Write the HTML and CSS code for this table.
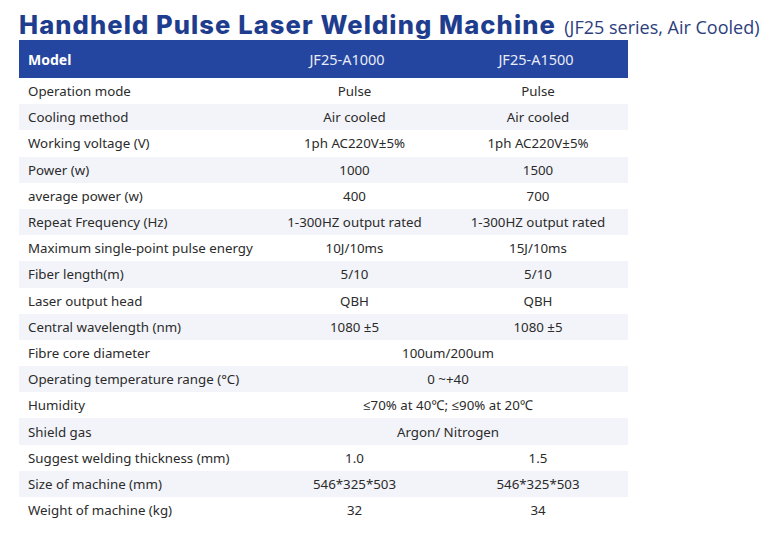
FILE: index.html
```html
<!DOCTYPE html>
<html>
<head>
<meta charset="utf-8">
<link rel="stylesheet" href="styles.css">
</head>
<body>
<h1 class="title"><span class="main">Handheld Pulse Laser Welding Machine</span> <span class="sub">(JF25 series, Air Cooled)</span></h1>
<table class="spec">
  <colgroup><col class="c1"><col class="c2"><col class="c3"></colgroup>
  <thead>
    <tr><th class="label">Model</th><th class="m1">JF25-A1000</th><th class="m2">JF25-A1500</th></tr>
  </thead>
  <tbody>
    <tr><td class="label">Operation mode</td><td class="v1">Pulse</td><td>Pulse</td></tr>
    <tr><td class="label">Cooling method</td><td class="v1">Air cooled</td><td>Air cooled</td></tr>
    <tr><td class="label">Working voltage (V)</td><td class="v1">1ph AC220V±5%</td><td>1ph AC220V±5%</td></tr>
    <tr><td class="label">Power (w)</td><td class="v1">1000</td><td>1500</td></tr>
    <tr><td class="label">average power (w)</td><td class="v1">400</td><td>700</td></tr>
    <tr><td class="label">Repeat Frequency (Hz)</td><td class="v1">1-300HZ output rated</td><td>1-300HZ output rated</td></tr>
    <tr><td class="label">Maximum single-point pulse energy</td><td class="v1">10J/10ms</td><td>15J/10ms</td></tr>
    <tr><td class="label">Fiber length(m)</td><td class="v1">5/10</td><td>5/10</td></tr>
    <tr><td class="label">Laser output head</td><td class="v1">QBH</td><td>QBH</td></tr>
    <tr><td class="label">Central wavelength (nm)</td><td class="v1">1080 ±5</td><td>1080 ±5</td></tr>
    <tr><td class="label">Fibre core diameter</td><td colspan="2">100um/200um</td></tr>
    <tr><td class="label">Operating temperature range (°C)</td><td colspan="2">0 ~+40</td></tr>
    <tr><td class="label">Humidity</td><td colspan="2">≤70% at 40℃; ≤90% at 20℃</td></tr>
    <tr><td class="label">Shield gas</td><td colspan="2">Argon/ Nitrogen</td></tr>
    <tr><td class="label">Suggest welding thickness (mm)</td><td class="v1">1.0</td><td>1.5</td></tr>
    <tr><td class="label">Size of machine (mm)</td><td class="v1">546*325*503</td><td>546*325*503</td></tr>
    <tr><td class="label">Weight of machine (kg)</td><td class="v1">32</td><td>34</td></tr>
  </tbody>
</table>
</body>
</html>
```
FILE: styles.css
```css
html, body {
  margin: 0;
  padding: 0;
  background: #ffffff;
}
body {
  padding: 7px 0 0 19px;
  font-family: "Noto Sans", "Open Sans", sans-serif;
  color: #2b2b2b;
}
.title {
  margin: 0;
  height: 33px;
  line-height: 30px;
  white-space: nowrap;
}
.title .main {
  font-family: Inter, "Liberation Sans", sans-serif;
  font-weight: 800;
  font-size: 25.5px;
  letter-spacing: 1.1px;
  color: #1f3d8e;
}
.title .sub {
  font-family: "Open Sans", "Noto Sans", sans-serif;
  font-weight: 400;
  font-size: 18px;
  color: #2c3e7c;
}
.spec {
  border-collapse: collapse;
  table-layout: fixed;
  width: 609px;
  font-size: 13.3px;
}
.spec .c1 { width: 249px; }
.spec .c2 { width: 180px; }
.spec .c3 { width: 180px; }
.spec thead tr {
  background: #2446a0;
  height: 38px;
}
.spec th {
  color: #e8ecf7;
  font-weight: 400;
  font-size: 14.5px;
  text-align: center;
  padding: 0;
}
.spec th.m1 { padding-right: 22px; }
.spec th.m2 { padding-right: 4px; }
.spec th.label {
  color: #ffffff;
  font-weight: 700;
  font-size: 14px;
  text-align: left;
  padding-left: 9px;
}
.spec tbody tr {
  height: 26.2px;
}
.spec tbody tr:nth-child(even) {
  background: #f3f4f9;
}
.spec td {
  padding: 0;
  text-align: center;
  line-height: 18px;
}
.spec td.v1 { padding-right: 7px; }
.spec td.label {
  text-align: left;
  padding-left: 9px;
}
```
